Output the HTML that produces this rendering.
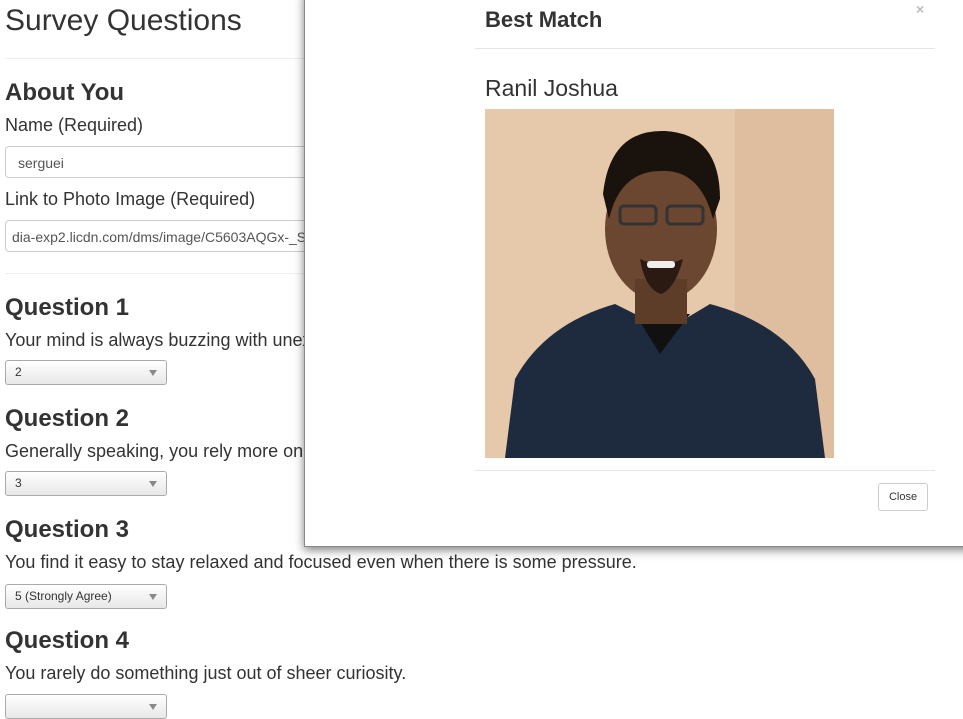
<!DOCTYPE html>
<html><head><style>
body{margin:0;width:963px;height:699px;overflow:hidden;background:#fff;font-family:"Liberation Sans",sans-serif;color:#333;position:relative}
.a{position:absolute;white-space:nowrap}
.h1{font-size:30px;color:#333}
.h3{font-size:24px;font-weight:bold}
.t{font-size:18px}
.inp{position:absolute;left:5px;height:32px;width:400px;border:1px solid #ccc;border-radius:4px;font-size:14px;line-height:32px;padding-left:12px;box-sizing:border-box;color:#555}
.sel{position:absolute;left:5px;width:162px;height:25px;border:1px solid #aaa;border-radius:3px;background:linear-gradient(#fff,#e8e8e8);font-size:12px;line-height:23px;padding-left:9px;box-sizing:border-box;color:#333}
.sel:after{content:"";position:absolute;right:9px;top:9px;border-left:4px solid transparent;border-right:4px solid transparent;border-top:6px solid #888}
.hr{position:absolute;left:5px;width:400px;height:1px;background:#eee}
.modal{position:absolute;left:304px;top:-10px;width:700px;height:555px;background:#fff;border:1px solid #888;box-shadow:0 3px 9px rgba(0,0,0,.5)}
</style></head><body>
<div class="a h1" style="left:5px;top:4px">Survey Questions</div>
<div class="hr" style="top:58px"></div>
<div class="a h3" style="left:5px;top:79px">About You</div>
<div class="a t" style="left:5px;top:115px">Name (Required)</div>
<div class="inp" style="top:146px">serguei</div>
<div class="a t" style="left:5px;top:189px">Link to Photo Image (Required)</div>
<div class="inp" style="top:220px;padding-left:6px">dia-exp2.licdn.com/dms/image/C5603AQGx-_S</div>
<div class="hr" style="top:273px"></div>
<div class="a h3" style="left:5px;top:294px">Question 1</div>
<div class="a t" style="left:5px;top:330px">Your mind is always buzzing with unexplored ideas and plans.</div>
<div class="sel" style="top:360px">2</div>
<div class="a h3" style="left:5px;top:405px">Question 2</div>
<div class="a t" style="left:5px;top:441px">Generally speaking, you rely more on your experience than your imagination.</div>
<div class="sel" style="top:471px">3</div>
<div class="a h3" style="left:5px;top:516px">Question 3</div>
<div class="a t" style="left:5px;top:552px">You find it easy to stay relaxed and focused even when there is some pressure.</div>
<div class="sel" style="top:584px">5 (Strongly Agree)</div>
<div class="a h3" style="left:5px;top:627px">Question 4</div>
<div class="a t" style="left:5px;top:663px">You rarely do something just out of sheer curiosity.</div>
<div class="sel" style="top:694px"></div>

<div class="modal">
 <div class="a" style="left:180px;top:16px;font-size:22px;font-weight:bold">Best Match</div>
 <div class="a" style="left:611px;top:10px;font-size:14px;color:#bbb;font-weight:bold">×</div>
 <div style="position:absolute;left:170px;top:57px;width:460px;height:1px;background:#e5e5e5"></div>
 <div class="a" style="left:180px;top:84px;font-size:23px">Ranil Joshua</div>
 <svg style="position:absolute;left:180px;top:118px" width="349" height="349" viewBox="0 0 349 349">
  <rect width="349" height="349" fill="#e6c8aa"/>
  <rect x="250" width="99" height="349" fill="#d9b898" opacity=".6"/>
  <path d="M20 349 L30 270 Q60 215 130 195 L160 210 L200 210 L225 195 Q300 215 330 270 L340 349Z" fill="#1e2a3e"/>
  <path d="M150 205 L175 245 L205 205Z" fill="#111"/>
  <ellipse cx="176" cy="120" rx="56" ry="72" fill="#6b4630"/>
  <rect x="150" y="170" width="52" height="45" fill="#5d3c28"/>
  <path d="M118 85 Q125 20 180 22 Q235 25 235 90 L228 110 Q215 60 176 62 Q135 62 124 110Z" fill="#1a120d"/>
  <rect x="135" y="97" width="36" height="18" rx="4" fill="none" stroke="#333" stroke-width="3"/>
  <rect x="182" y="97" width="36" height="18" rx="4" fill="none" stroke="#333" stroke-width="3"/>
  <path d="M155 150 Q176 160 198 150 Q190 180 176 185 Q160 180 155 150Z" fill="#2a1a12"/>
  <rect x="162" y="152" width="28" height="7" rx="3" fill="#eee"/>
 </svg>
 <div style="position:absolute;left:170px;top:479px;width:460px;height:1px;background:#e5e5e5"></div>
 <div class="a" style="left:573px;top:492px;width:48px;height:26px;border:1px solid #ccc;border-radius:3px;font-size:11px;line-height:26px;text-align:center">Close</div>
</div>
</body></html>
